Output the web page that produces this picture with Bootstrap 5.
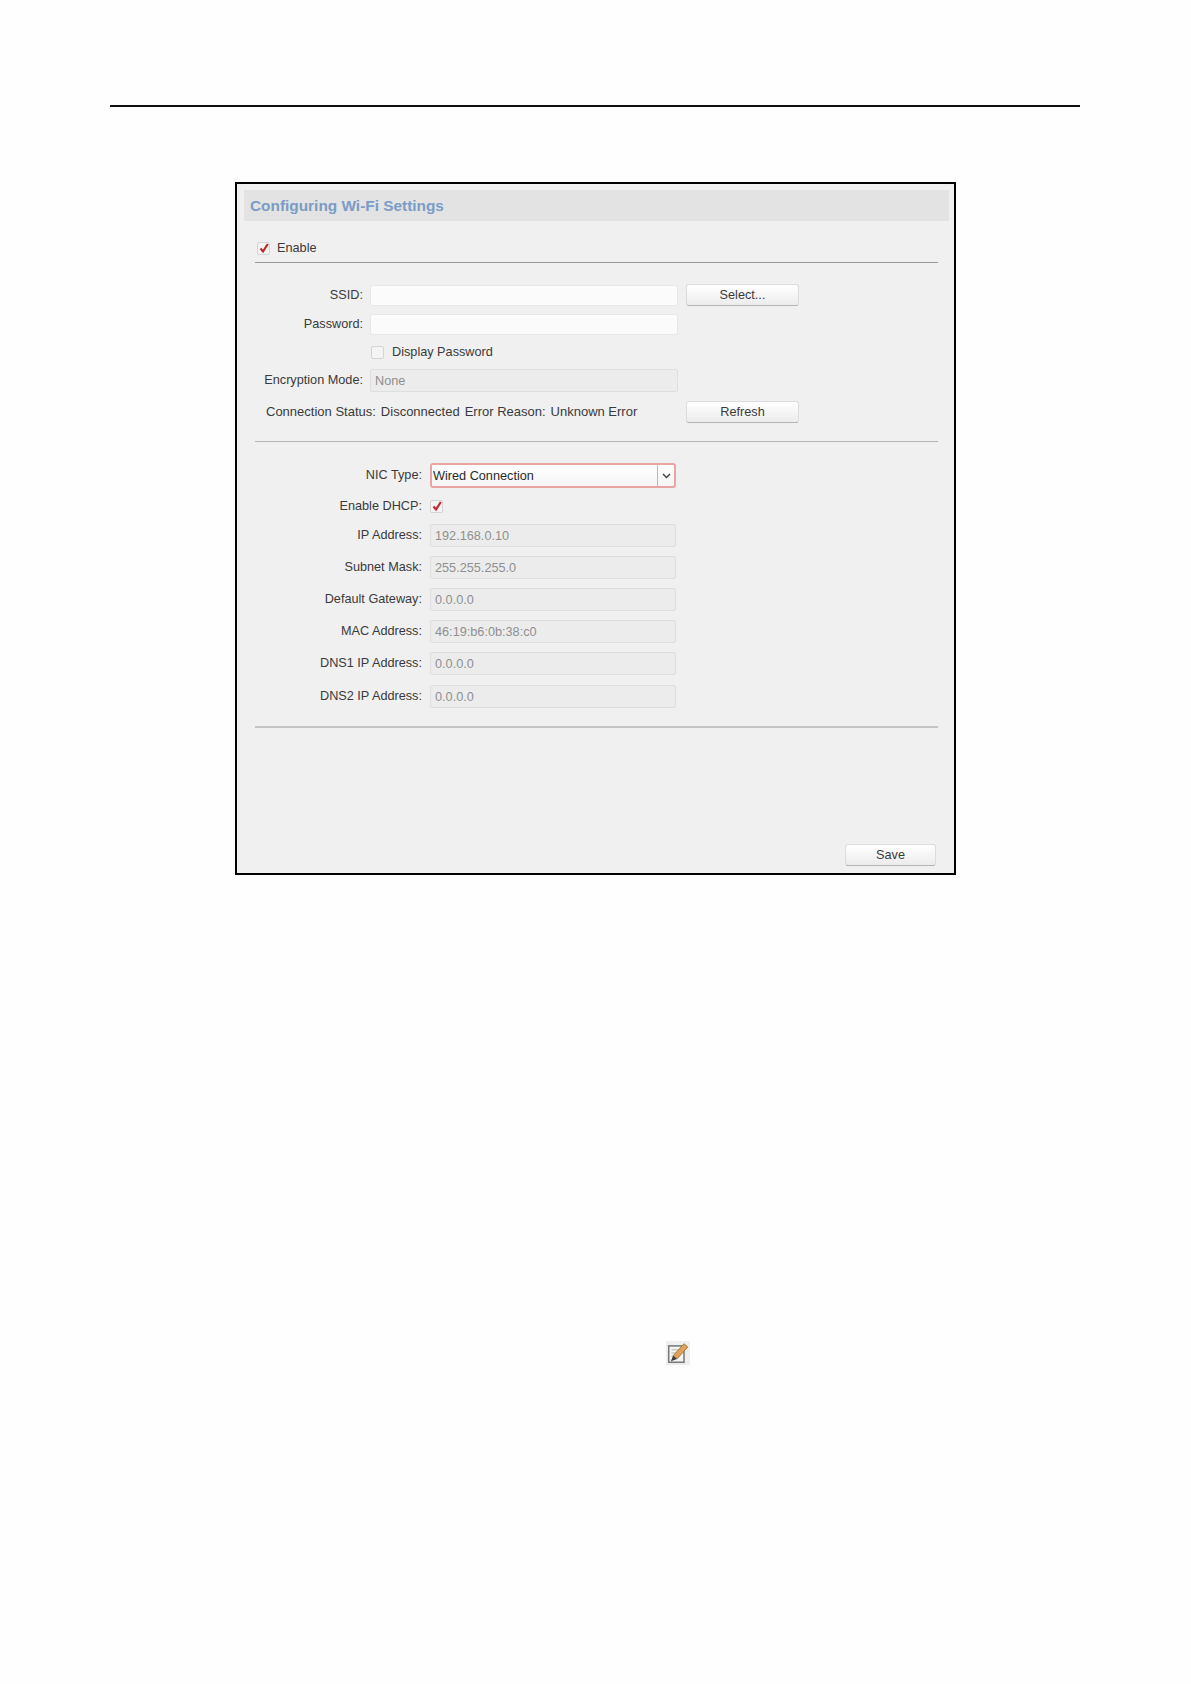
<!DOCTYPE html>
<html lang="en">
<head>
<meta charset="utf-8">
<title>Configuring Wi-Fi Settings</title>
<link href="https://cdn.jsdelivr.net/npm/bootstrap@5.3.0/dist/css/bootstrap.min.css" rel="stylesheet">
<style>
html,body{background:#fefefe;}
body{font-family:"Liberation Sans",Arial,sans-serif;font-size:12.7px;color:#3a3a3a;height:1684px;padding:105px 111px 0 110px;}
.top-rule{height:2px;background:#111;}
.frame{width:721px;height:693px;margin:75px 0 0 125px;border:2px solid #000;background:#f0f0f0;padding:6px 5px 0 7px;display:flex;flex-direction:column;}
.title-bar{height:31px;background:#e3e3e3;color:#7a9cc6;font-size:15.4px;font-weight:700;padding-left:6px;line-height:31px;}
.frame-body{padding:0 11px 0 11px;display:flex;flex-direction:column;flex:1;}
.enable-row{height:42px;padding:14px 0 0 2px;gap:7px;border-bottom:1px solid #9a9a9a;}
.sep{border-bottom:1px solid #b5b5b5;}
.sep-a{height:19px;}
.sep-b{height:20px;border-bottom-width:2px;border-color:#c4c4c4;}
.fld{gap:7px;}
.fld-b{gap:8px;}
.lbl-a{width:108px;text-align:right;flex:none;padding-top:1px;}
.lbl-b{width:167px;text-align:right;flex:none;padding-top:1px;}
.txt{height:21px;width:308px;background:#fbfbfb;border:1px solid #e8e8e8;border-radius:2px;color:#8f8f8f;padding:0 4px;line-height:20px;}
.txt-off{background:#ececec;border-color:#dedede;height:23px;line-height:22px;}
.txt-b{width:246px;}
.fake-btn{width:113px;height:22px;font-size:12.700px;line-height:20px;padding:0;color:#3a3a3a;background:linear-gradient(#fff,#ececec);border:1px solid #dcdcdc;border-bottom-color:#b4b4b4;border-radius:3px;margin-left:1px;}
.chk{width:13px;height:13px;flex:none;background:#f4f4f4;border:1px solid #d4d4d4;border-radius:2px;position:relative;}
.chk svg{position:absolute;left:0;top:-1px;}
.chk-d{margin-left:1px;margin-right:1px;}
.nic{height:25px;width:246px;border:2px solid #e8a5a1;border-radius:3px;background:linear-gradient(#fff,#f5f5f5);color:#2a2a2a;line-height:20px;padding-left:1px;}
.nic-val{flex:1;}
.nic-arrow{width:17px;height:100%;border-left:1px solid #bbb;}
.r-a1{margin-top:21px;}
.r-a2{margin-top:8px;}
.r-a3{margin-top:8px;height:18px;}
.r-a3 span:last-child{padding-top:1px;}
.r-a4{margin-top:8px;}
.r-a5{margin-top:9px;}
.r-b1{margin-top:21px;}
.r-b2{margin-top:8px;height:20px;}
.r-b3{margin-top:8px;}
.r-b4{margin-top:9px;}
.r-b5{margin-top:10px;}
.status{gap:5px;padding-left:11px;width:427px;font-size:13px;}
.save-row{margin-top:auto;padding:0 0 7px;}
.save{width:91px;margin:0 2px 0 0;}
.note-icon{margin:466px 0 0 556px;display:block;}
</style>
</head>
<body>
<div class="top-rule"></div>
<div class="frame">
  <div class="title-bar">Configuring Wi-Fi Settings</div>
  <div class="frame-body">
    <div class="enable-row d-flex align-items-center">
      <span class="chk"><svg width="12" height="12" viewBox="0 0 12 12"><path d="M2.500 6.500 5 9.500 9.800 2" fill="none" stroke="#c1272d" stroke-width="2.2"/></svg></span>
      <span>Enable</span>
    </div>

    <div class="fld d-flex align-items-center r-a1"><span class="lbl-a">SSID:</span><div class="txt"></div><button type="button" class="fake-btn">Select...</button></div>
    <div class="fld d-flex align-items-center r-a2"><span class="lbl-a">Password:</span><div class="txt"></div></div>
    <div class="fld d-flex align-items-center r-a3"><span class="lbl-a"></span><span class="chk chk-d"></span><span>Display Password</span></div>
    <div class="fld d-flex align-items-center r-a4"><span class="lbl-a">Encryption Mode:</span><div class="txt txt-off">None</div></div>
    <div class="d-flex align-items-center r-a5">
      <div class="status d-flex"><span>Connection Status:</span><span>Disconnected</span><span>Error Reason:</span><span>Unknown Error</span></div>
      <button type="button" class="fake-btn ms-1">Refresh</button>
    </div>
    <div class="sep sep-a"></div>

    <div class="fld-b d-flex align-items-center r-b1"><span class="lbl-b">NIC Type:</span>
      <div class="nic d-flex align-items-center"><span class="nic-val">Wired Connection</span><span class="nic-arrow d-flex align-items-center justify-content-center"><svg width="9" height="6" viewBox="0 0 9 6"><path d="M1 1 4.500 4.500 8 1" fill="none" stroke="#444" stroke-width="1.500"/></svg></span></div>
    </div>
    <div class="fld-b d-flex align-items-center r-b2"><span class="lbl-b">Enable DHCP:</span><span class="chk"><svg width="12" height="12" viewBox="0 0 12 12"><path d="M2.500 6.500 5 9.500 9.800 2" fill="none" stroke="#c1272d" stroke-width="2.2"/></svg></span></div>
    <div class="fld-b d-flex align-items-center r-b3"><span class="lbl-b">IP Address:</span><div class="txt txt-off txt-b">192.168.0.10</div></div>
    <div class="fld-b d-flex align-items-center r-b4"><span class="lbl-b">Subnet Mask:</span><div class="txt txt-off txt-b">255.255.255.0</div></div>
    <div class="fld-b d-flex align-items-center r-b4"><span class="lbl-b">Default Gateway:</span><div class="txt txt-off txt-b">0.0.0.0</div></div>
    <div class="fld-b d-flex align-items-center r-b4"><span class="lbl-b">MAC Address:</span><div class="txt txt-off txt-b">46:19:b6:0b:38:c0</div></div>
    <div class="fld-b d-flex align-items-center r-b4"><span class="lbl-b">DNS1 IP Address:</span><div class="txt txt-off txt-b">0.0.0.0</div></div>
    <div class="fld-b d-flex align-items-center r-b5"><span class="lbl-b">DNS2 IP Address:</span><div class="txt txt-off txt-b">0.0.0.0</div></div>
    <div class="sep sep-b"></div>

    <div class="save-row d-flex justify-content-end"><button type="button" class="fake-btn save">Save</button></div>
  </div>
</div>
<svg class="note-icon" width="24" height="24" viewBox="0 0 22 22">
  <rect x="0" y="0" width="22" height="22" fill="#efefef"/>
  <rect x="2.500" y="4.500" width="14" height="15" fill="#f4f4f4" stroke="#77797c" stroke-width="1.400"/>
  <path d="M5 8h7M5 11h5M5 14h4" stroke="#b5b5b5"/>
  <path d="M6.500 13.500 16.500 2.500l3.500 3L10 16.500z" fill="#e0a15c" stroke="#a8702f" stroke-width=".8"/>
  <path d="M4.500 18.500 6.500 13.500 10 16.500z" fill="#3a3a3a"/>
</svg>
</body>
</html>
